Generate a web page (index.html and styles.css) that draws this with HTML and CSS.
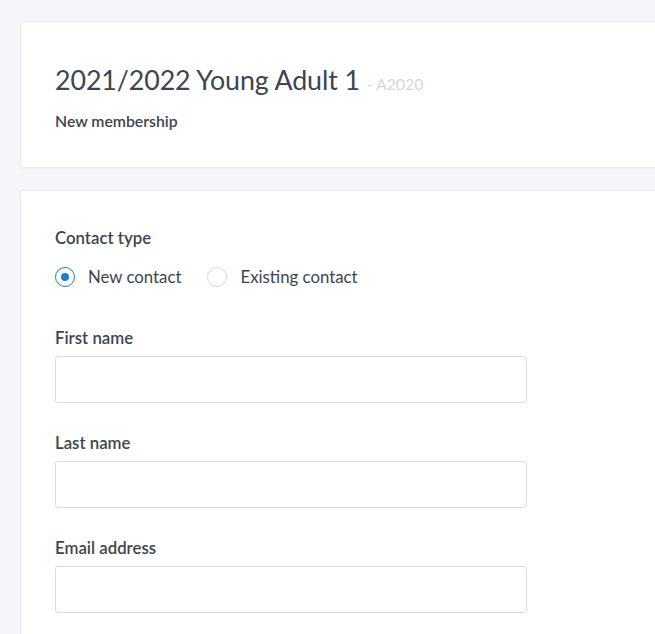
FILE: index.html
```html
<!DOCTYPE html>
<html>
<head>
<meta charset="utf-8">
<link rel="stylesheet" href="styles.css">
</head>
<body>
<div class="page">
  <section class="card header-card">
    <h1 class="title">2021/2022 Young Adult 1 <span class="code">- A2020</span></h1>
    <p class="subtitle">New membership</p>
  </section>
  <section class="card form-card">
    <div class="field radio-field">
      <div class="label">Contact type</div>
      <div class="radios">
        <label class="radio"><span class="dot checked"></span>New contact</label>
        <label class="radio"><span class="dot"></span>Existing contact</label>
      </div>
    </div>
    <div class="field">
      <div class="label">First name</div>
      <div class="input"></div>
    </div>
    <div class="field">
      <div class="label">Last name</div>
      <div class="input"></div>
    </div>
    <div class="field">
      <div class="label">Email address</div>
      <div class="input"></div>
    </div>
  </section>
</div>
</body>
</html>
```
FILE: styles.css
```css
html, body {
  margin: 0;
  padding: 0;
  background: #f5f6fa;
  overflow: hidden;
}
body {
  font-family: Lato, "Open Sans", sans-serif;
  color: #3d4451;
}
.page {
  display: flex;
  flex-direction: column;
  gap: 22px;
  padding: 21px 0 0 20px;
}
.card {
  width: 720px;
  background: #fff;
  border: 1px solid #eaecf0;
  border-radius: 3px;
  box-shadow: 0 1px 3px rgba(30, 40, 70, 0.04);
}
.header-card {
  padding: 42px 34px 34px;
  height: 69px;
}
.title {
  margin: 0;
  font-size: 26.8px;
  font-weight: 400;
  line-height: 32px;
  color: #3d4550;
  letter-spacing: -0.1px;
}
.code {
  font-size: 16px;
  color: #d3d7dc;
  font-weight: 400;
}
.subtitle {
  margin: 11px 0 0;
  font-size: 15.8px;
  font-weight: 600;
  line-height: 20px;
  color: #3d4451;
}
.form-card {
  padding: 37px 34px 40px;
  display: flex;
  flex-direction: column;
  gap: 30px;
}
.field {
  display: flex;
  flex-direction: column;
}
.radio-field {
  margin-bottom: 10px;
}
.label {
  font-size: 16.8px;
  font-weight: 600;
  line-height: 20px;
  color: #3d4451;
  margin-bottom: 8px;
}
.radios {
  display: flex;
  gap: 26px;
  align-items: center;
  padding-top: 10px;
}
.radio {
  display: flex;
  align-items: center;
  gap: 13px;
  font-size: 16.8px;
  line-height: 22px;
  color: #3d4451;
}
.dot {
  width: 18px;
  height: 18px;
  border: 1px solid #d6d9de;
  border-radius: 50%;
  box-sizing: content-box;
  display: inline-flex;
  align-items: center;
  justify-content: center;
}
.dot.checked {
  border-color: #1f7dc8;
}
.dot.checked::after {
  content: "";
  width: 8px;
  height: 8px;
  border-radius: 50%;
  background: #1f7dc8;
}
.input {
  width: 470px;
  height: 45px;
  border: 1px solid #d9dce1;
  border-radius: 3px;
  background: #fff;
}
```
